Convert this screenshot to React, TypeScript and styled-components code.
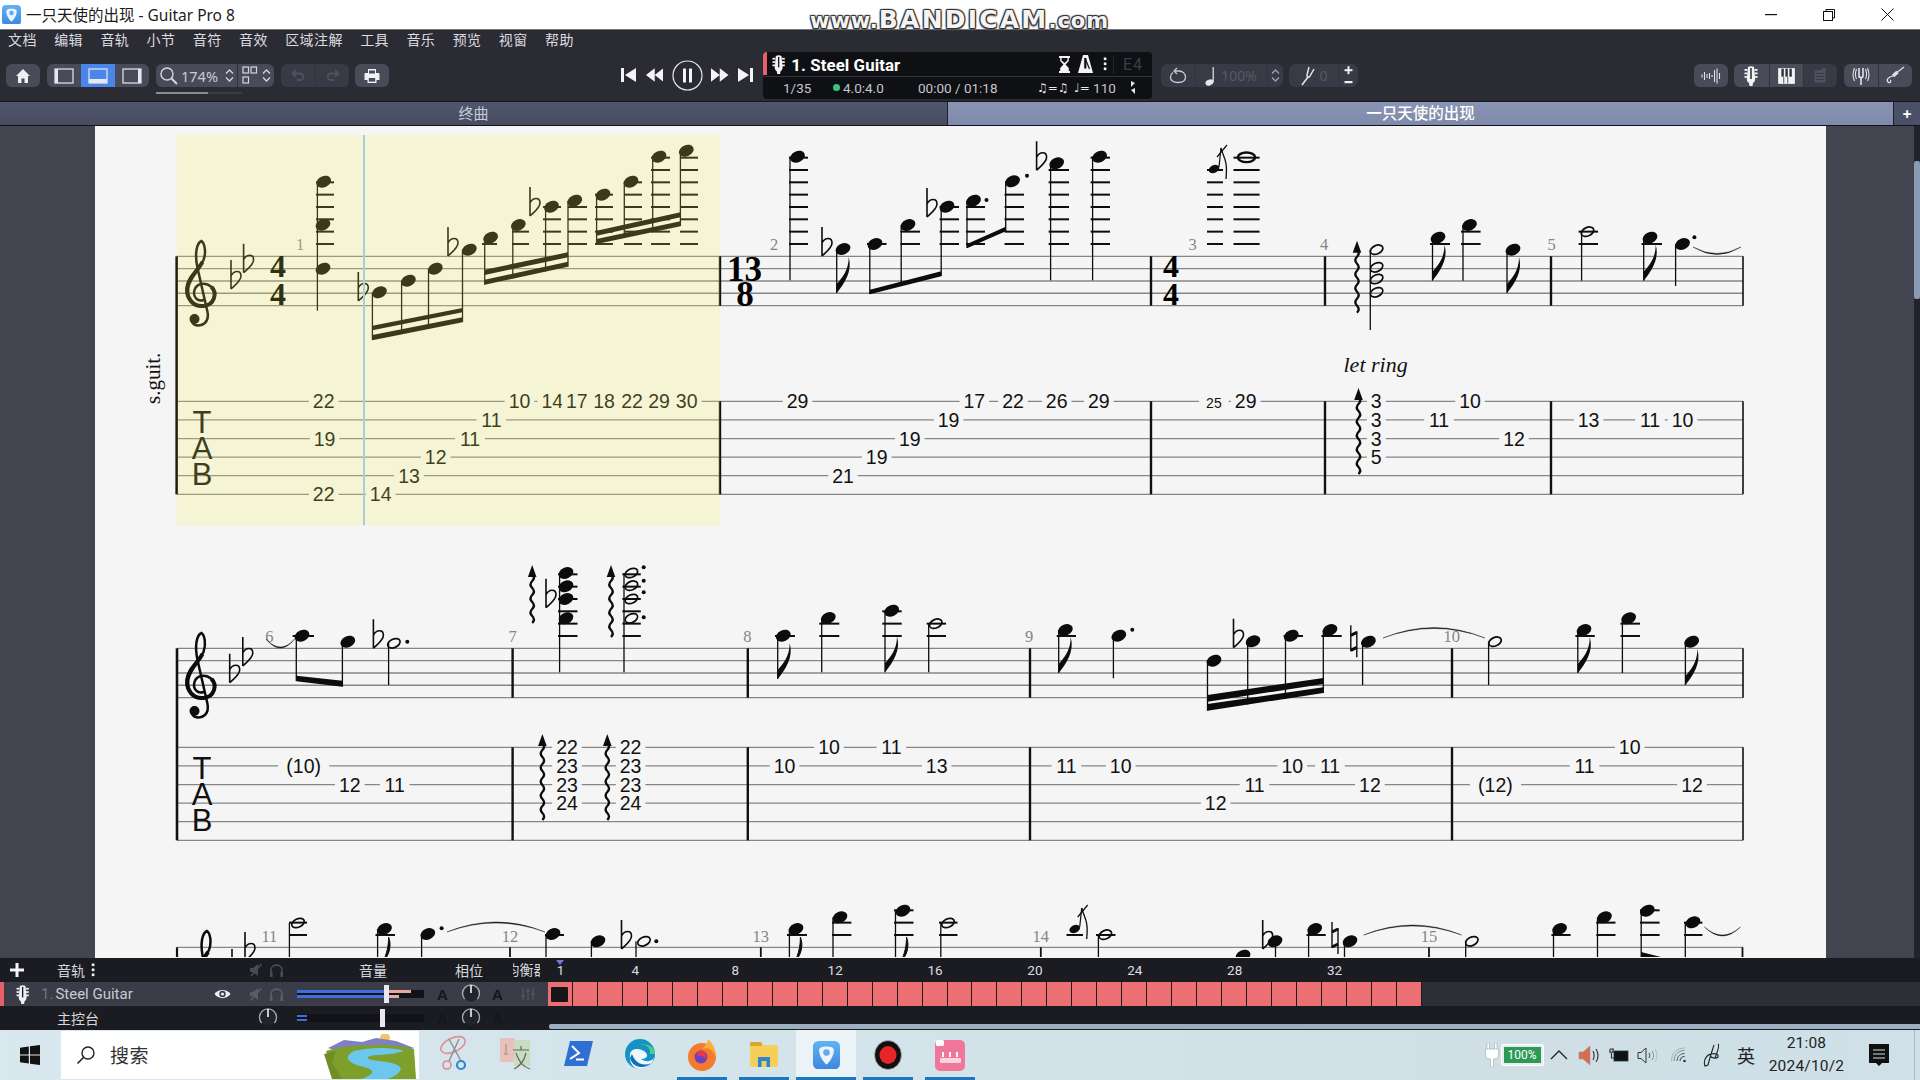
import React from "react";
import styled, { createGlobalStyle } from "styled-components";

const CJK = `"Noto Sans", "Noto Sans CJK SC", sans-serif`;

const GlobalStyle = createGlobalStyle`
  html, body { margin: 0; padding: 0; background: #2b2b33; }
  * { box-sizing: border-box; }
  #root { width: 1920px; height: 1080px; overflow: hidden; }
`;

const Root = styled.div`
  position: relative;
  width: 1920px;
  height: 1080px;
  display: flex;
  flex-direction: column;
  overflow: hidden;
  font-family: ${CJK};
`;

/* ---------- title bar ---------- */
const TitleBar = styled.div`
  height: 30px;
  flex: none;
  background: #fff;
  border-bottom: 1px solid #77777c;
  display: flex;
  align-items: center;
  padding-left: 2px;
`;
const AppTitle = styled.span`
  margin-left: 5px;
  font-size: 15.5px;
  color: #1c1c1c;
  white-space: nowrap;
`;
const WinControls = styled.div`
  margin-left: auto;
  display: flex;
  margin-right: 3px;
`;
const WinButton = styled.div`
  width: 58.5px;
  height: 28px;
  display: flex;
  align-items: center;
  justify-content: center;
`;
const Watermark = styled.div`
  position: absolute;
  left: 810px;
  top: 7px;
  font-family: "DejaVu Sans", sans-serif;
  font-weight: 700;
  font-size: 25px;
  line-height: 26px;
  letter-spacing: 2.2px;
  color: #f4f4f4;
  white-space: nowrap;
  text-shadow: 0 0 1px #222, 1px 1px 1px #333, -1px -1px 1px #333, 1px -1px 1px #333, -1px 1px 1px #333, 0 2px 2px #555;
  small { font-size: 21px; letter-spacing: 1px; }
`;

/* ---------- menu ---------- */
const MenuBar = styled.div`
  height: 22px;
  flex: none;
  background: #2b2b33;
  display: flex;
  align-items: center;
  gap: 17.4px;
  padding: 0 0 2px 8px;
`;
const MenuItem = styled.span`
  font-size: 14px;
  letter-spacing: 0.4px;
  color: #dcdce0;
  line-height: 20px;
`;

/* ---------- toolbar ---------- */
const Toolbar = styled.div`
  height: 50px;
  flex: none;
  background: #2b2b33;
  display: flex;
  align-items: flex-start;
  padding-left: 6px;
  border-bottom: 1px solid #16171b;
`;
const BtnGroup = styled.div<{ $ml?: number }>`
  margin-top: 12px;
  margin-left: ${(p) => p.$ml ?? 0}px;
  height: 23px;
  display: flex;
  flex: none;
  border-radius: 6px;
  overflow: hidden;
`;
const ToolBtn = styled.div<{ $w?: number; $on?: boolean; $dim?: boolean; $sep?: boolean }>`
  width: ${(p) => p.$w ?? 34}px;
  height: 23px;
  display: flex;
  align-items: center;
  justify-content: center;
  gap: 4px;
  background: ${(p) => (p.$on ? "#4a85ea" : p.$dim ? "#383a45" : "#494b59")};
  border-left: ${(p) => (p.$sep ? "1px solid #30313a" : "none")};
  color: #c9ccd8;
  font-size: 14.5px;
`;
const ZoomLabel = styled.span`
  margin: 0 3px 0 -2px;
`;
const DimText = styled.span`
  color: #565965;
  font-size: 14px;
`;
const ZoomWrap = styled.div`
  margin-left: 7px;
  display: flex;
  flex-direction: column;
  flex: none;
  & > div:first-child { margin-left: 0; }
`;
const ZoomTrack = styled.div`
  margin-top: 5px;
  width: 86px;
  height: 2px;
  background: #3b3c44;
`;
const ZoomThumb = styled.div`
  width: 52px;
  height: 2px;
  background: #8c8c92;
`;
const Transport = styled.div`
  margin-left: 232px;
  margin-top: 7px;
  display: flex;
  align-items: center;
  gap: 8.5px;
  height: 32px;
  flex: none;
`;
const InfoPanel = styled.div`
  margin-left: 10px;
  width: 389px;
  height: 47px;
  flex: none;
  background: #0f1014;
  border-radius: 4px;
  position: relative;
  overflow: hidden;
`;
const InfoAccent = styled.div`
  position: absolute;
  left: 0;
  top: 0;
  width: 4px;
  height: 23px;
  background: #e9606b;
`;
const InfoTop = styled.div`
  height: 25px;
  display: flex;
  align-items: center;
  padding-left: 9px;
  border-bottom: 1px solid #33343b;
  color: #fff;
`;
const TrackName = styled.span`
  margin-left: 6px;
  padding-top: 2px;
  font-family: Roboto, sans-serif;
  font-weight: 700;
  font-size: 16.8px;
  letter-spacing: 0.1px;
  white-space: nowrap;
`;
const InfoIcons = styled.div`
  margin-left: auto;
  display: flex;
  align-items: center;
  height: 24px;
`;
const IconSlot = styled.div<{ $w: number }>`
  width: ${(p) => p.$w}px;
  display: flex;
  align-items: center;
  justify-content: center;
`;
const TuneText = styled.span`
  width: 39px;
  padding-left: 9px;
  border-left: 1px solid #24252a;
  font-family: Roboto, sans-serif;
  font-size: 16px;
  letter-spacing: 1px;
  color: #3d3e46;
`;
const InfoBottom = styled.div`
  height: 21px;
  position: relative;
  display: flex;
  align-items: center;
  font-family: Roboto, sans-serif;
  font-size: 13.5px;
  color: #c6c7cc;
  white-space: nowrap;
`;
const InfoCell = styled.span<{ $w: number; $ml?: number }>`
  width: ${(p) => p.$w}px;
  margin-left: ${(p) => p.$ml ?? 0}px;
  display: inline-flex;
  align-items: center;
  flex: none;
`;
const StatusDot = styled.i`
  width: 7px;
  height: 7px;
  border-radius: 50%;
  background: #3cc27a;
  margin-right: 3px;
`;
const MusicGlyph = styled.span`
  font-family: "DejaVu Sans", sans-serif;
  color: #e8e8ea;
  font-size: 12px;
`;

/* ---------- tab bar ---------- */
const TabBar = styled.div`
  height: 24px;
  flex: none;
  display: flex;
  border-bottom: 1px solid #11131a;
`;
const Tab = styled.div<{ $on?: boolean; $w: number }>`
  width: ${(p) => p.$w}px;
  flex: none;
  display: flex;
  align-items: center;
  justify-content: center;
  padding-bottom: 2px;
  font-size: ${(p) => (p.$on ? 15.5 : 15)}px;
  background: ${(p) => (p.$on ? "linear-gradient(#8a94b6, #7f8aaa)" : "linear-gradient(#50566e, #474c60)")};
  color: ${(p) => (p.$on ? "#ffffff" : "#c8ccd6")};
  font-weight: ${(p) => (p.$on ? 500 : 400)};
  border-right: 1px solid #1d2029;
`;
const AddTab = styled.div`
  flex: 1;
  display: flex;
  align-items: center;
  justify-content: center;
  background: #4b5069;
  color: #fff;
  font-size: 16px;
  font-weight: 700;
`;

/* ---------- score ---------- */
const ScoreArea = styled.div`
  flex: 1;
  min-height: 0;
  display: flex;
  background: #42444f;
`;
const Gutter = styled.div<{ $w: number }>`
  width: ${(p) => p.$w}px;
  flex: none;
  display: flex;
  justify-content: flex-end;
`;
const ScrollTrack = styled.div`
  width: 6px;
  height: 100%;
  background: #22232a;
  padding-top: 35px;
`;
const ScrollThumb = styled.div`
  width: 6px;
  height: 138px;
  background: #8a9bb6;
  border-radius: 2px;
`;
const Page = styled.div`
  width: 1731px;
  flex: none;
  background: #f5f5f5;
  overflow: hidden;
`;
const TabNum = styled.text<{ $s?: number }>`
  font-family: "Liberation Sans", sans-serif;
  font-size: ${(p) => p.$s ?? 19.5}px;
  fill: #111;
  text-anchor: middle;
`;
const BarNum = styled.text`
  font-family: "Liberation Serif", serif;
  font-size: 16.5px;
  fill: #858585;
  text-anchor: middle;
`;
const TabLetter = styled.text`
  font-family: "Liberation Sans", sans-serif;
  font-size: 31px;
  fill: #111;
  text-anchor: middle;
`;
const TimeSig = styled.text<{ $s: number }>`
  font-family: "Liberation Serif", serif;
  font-weight: 700;
  font-size: ${(p) => p.$s}px;
  fill: #000;
  text-anchor: middle;
`;
const ScoreText = styled.text<{ $s: number; $i?: boolean }>`
  font-family: "Liberation Serif", serif;
  font-size: ${(p) => p.$s}px;
  font-style: ${(p) => (p.$i ? "italic" : "normal")};
  fill: #111;
`;

/* ---------- track panel ---------- */
const Panel = styled.div`
  height: 72px;
  flex: none;
  display: grid;
  grid-template-columns: 548px 1fr;
  grid-template-rows: 24px 24px 24px;
  background: #1b1c21;
  font-size: 14px;
  color: #d8d8dc;
`;
const TrackCols = styled.div<{ $bg?: string }>`
  display: grid;
  grid-template-columns: 46px 124px 75px 45px 140px 25px 32px 21px 40px;
  align-items: center;
  height: 24px;
  background: ${(p) => p.$bg ?? "#1b1c21"};
  position: relative;
`;
const Cell = styled.div<{ $span?: number; $pl?: number; $j?: string }>`
  grid-column: span ${(p) => p.$span ?? 1};
  padding-left: ${(p) => p.$pl ?? 0}px;
  display: flex;
  align-items: center;
  justify-content: ${(p) => p.$j ?? "flex-start"};
  gap: 6px;
  height: 24px;
  min-width: 0;
`;
const Clip = styled.div`
  margin-left: 5px;
  width: 27px;
  height: 24px;
  overflow: hidden;
  display: flex;
  justify-content: center;
  white-space: nowrap;
  line-height: 24px;
`;
const TrackAccent = styled.div`
  position: absolute;
  left: 0;
  top: 0;
  width: 4px;
  height: 24px;
  background: #e9606b;
`;
const TrackLabel = styled.span`
  margin-left: -5px;
  font-family: Roboto, sans-serif;
  font-size: 15px;
  color: #c9cad0;
  white-space: nowrap;
  em { font-style: normal; color: #74767f; margin-right: 2px; }
`;
const AutoA = styled.span`
  font-family: "Liberation Sans", sans-serif;
  font-weight: 700;
  font-size: 15px;
  color: #15161a;
`;
const Slider = styled.div`
  position: relative;
  width: 127px;
  height: 18px;
  margin-left: 7px;
  display: flex;
  flex-direction: column;
  justify-content: center;
  gap: 2px;
  background: linear-gradient(#0000 5px, #121318 5px, #121318 13px, #0000 13px);
`;
const MeterBar = styled.div<{ $w: number; $c: string; $h?: number }>`
  width: ${(p) => p.$w}px;
  height: ${(p) => p.$h ?? 3}px;
  background: ${(p) => p.$c};
`;
const MeterRow = styled.div`
  display: flex;
`;
const Handle = styled.div<{ $x: number }>`
  position: absolute;
  left: ${(p) => p.$x}px;
  top: 0;
  width: 5px;
  height: 18px;
  background: #e8e8ee;
`;
const Ruler = styled.div`
  display: grid;
  grid-template-columns: repeat(35, 24.97px);
  height: 24px;
  align-items: center;
  justify-items: center;
  font-family: Roboto, sans-serif;
  font-size: 13.5px;
  color: #dcdce0;
  position: relative;
`;
const Playhead = styled.div`
  position: absolute;
  left: 8px;
  top: 2px;
  width: 0;
  height: 0;
  border-left: 4px solid transparent;
  border-right: 4px solid transparent;
  border-top: 5px solid #6c7ae0;
`;
const RulerNum = styled.span`
  white-space: nowrap;
`;
const Cells = styled.div`
  height: 24px;
  background: #2d2e36;
  display: flex;
`;
const Measure = styled.div`
  width: 24.97px;
  height: 24px;
  flex: none;
  background: #ec7073;
  border-right: 1px solid #22181a;
  display: flex;
  align-items: center;
  justify-content: center;
`;
const Cursor = styled.div`
  width: 17px;
  height: 15px;
  background: #17161a;
  border-radius: 1px;
`;
const TimelineFoot = styled.div`
  height: 24px;
  display: flex;
  align-items: flex-end;
  padding-bottom: 1px;
`;
const HScroll = styled.div`
  width: 100%;
  margin-left: 1px;
  height: 5px;
  background: #9cafc0;
  border-radius: 2px 0 0 2px;
`;

/* ---------- taskbar ---------- */
const Taskbar = styled.div`
  height: 50px;
  flex: none;
  display: flex;
  align-items: stretch;
  background: linear-gradient(90deg, #d9e7ee, #d2e3ea 50%, #d0dfe6 80%, #cfe0e8);
`;
const StartSlot = styled.div`
  width: 61px;
  display: flex;
  align-items: center;
  justify-content: center;
  padding-right: 1px;
`;
const SearchBox = styled.div`
  width: 358px;
  margin: 1px 0;
  background: #fff;
  display: flex;
  align-items: center;
  padding-left: 15px;
  overflow: hidden;
  position: relative;
`;
const SearchLabel = styled.span`
  margin-left: 14px;
  font-size: 19px;
  color: #333;
  letter-spacing: 0.5px;
`;
const SearchArt = styled.div`
  margin-left: auto;
  margin-right: 3px;
  align-self: flex-end;
  display: flex;
`;
const Apps = styled.div`
  margin-left: 4px;
  display: flex;
`;
const AppSlot = styled.div<{ $open?: boolean; $active?: boolean }>`
  width: ${(p) => (p.$active ? 60 : p.$open ? 50 : 62)}px;
  margin: 0 ${(p) => (p.$active ? 1 : p.$open ? 6 : 0)}px;
  display: flex;
  align-items: center;
  justify-content: center;
  background: ${(p) => (p.$active ? "#ecf3f7" : "transparent")};
  border-bottom: 3px solid ${(p) => (p.$open || p.$active ? "#1a78c2" : "transparent")};
  padding-top: ${(p) => (p.$open || p.$active ? 3 : 0)}px;
`;
const Tray = styled.div`
  margin-left: auto;
  display: flex;
  align-items: center;
`;
const TraySlot = styled.div<{ $w: number }>`
  width: ${(p) => p.$w}px;
  height: 50px;
  display: flex;
  align-items: center;
  justify-content: center;
`;
const BatteryBody = styled.div`
  width: 43px;
  height: 22px;
  margin-left: 2px;
  padding: 2px;
  border: 1px solid #fff;
  border-radius: 2px;
  background: #e8eef0;
`;
const BatteryFill = styled.div`
  height: 16px;
  background: #2b9a57;
  color: #fff;
  font-size: 12px;
  line-height: 16px;
  text-align: center;
  font-family: Roboto, sans-serif;
`;
const ImeText = styled.span`
  font-size: 18px;
  color: #222;
`;
const Clock = styled.div`
  font-family: Roboto, sans-serif;
  font-size: 15.5px;
  line-height: 23px;
  text-align: center;
  color: #222;
  letter-spacing: 0.2px;
`;
const TrayEnd = styled.div`
  width: 9px;
  margin-right: 5px;
  height: 50px;
  border-right: 1px solid #aab9c2;
`;

/* ---------- icons ---------- */
const HomeIcon = () => (
  <svg width="16" height="16" viewBox="0 0 16 16"><path d="M8 1 L15 8 H13 V15 H9.5 V10.5 H6.5 V15 H3 V8 H1 Z" fill="#f0f0f4" /></svg>
);
const PaneIcon = ({ kind, c = "#e8e8ee" }: { kind: "left" | "bottom" | "right"; c?: string }) => (
  <svg width="20" height="16" viewBox="0 0 20 16">
    <rect x="1" y="1" width="18" height="14" fill="none" stroke={c} strokeWidth="1.2" />
    {kind === "left" && <rect x="1" y="1" width="3" height="14" fill={c} />}
    {kind === "right" && <rect x="16" y="1" width="3" height="14" fill={c} />}
    {kind === "bottom" && <rect x="1" y="11" width="18" height="4" fill={c} />}
  </svg>
);
const Mag = () => (
  <svg width="20" height="20" viewBox="0 0 20 20" fill="none" stroke="#d4d7e2" strokeWidth="1.4">
    <circle cx="8" cy="8" r="6" /><path d="M12.5 12.5 L18 18" strokeWidth="2" />
  </svg>
);
const Chevrons = ({ c = "#d4d7e2" }: { c?: string }) => (
  <svg width="9" height="15" viewBox="0 0 9 15" fill="none" stroke={c} strokeWidth="1.3">
    <path d="M1 5.5 L4.5 2 L8 5.5 M1 9.5 L4.5 13 L8 9.5" />
  </svg>
);
const GridIcon = () => (
  <svg width="16" height="19" viewBox="0 0 16 19" fill="none" stroke="#d4d7e2" strokeWidth="1.2">
    <rect x="1" y="1" width="5.5" height="6" /><rect x="9" y="1" width="5.5" height="6" /><rect x="1" y="11" width="5.5" height="6" />
  </svg>
);
const UndoIcon = ({ flip }: { flip?: boolean }) => (
  <svg width="15" height="13" viewBox="0 0 15 13" fill="none" stroke="#4f515e" strokeWidth="1.8" style={flip ? { transform: "scaleX(-1)" } : undefined}>
    <path d="M5 1 L1.5 4.5 L5 8 M2 4.5 H9 C13 4.5 13.5 11 9 11 H6" />
  </svg>
);
const PrintIcon = () => (
  <svg width="16" height="16" viewBox="0 0 16 16"><path d="M4 1 H12 V5 H14.5 C15 5 15.5 5.5 15.5 6 V12 H12.5 V15 H3.5 V12 H.5 V6 C.5 5.5 1 5 1.5 5 H4 Z" fill="#f0f0f4" /><rect x="5" y="2.5" width="6" height="3" fill="#494b59" /><rect x="4.8" y="10" width="6.4" height="3.6" fill="#494b59" /></svg>
);
const Skip = ({ dir }: { dir: "prev" | "next" }) => (
  <svg width="15" height="16" viewBox="0 0 15 16" fill="#f4f4f6" style={dir === "next" ? { transform: "scaleX(-1)" } : undefined}>
    <rect x="0" y="1" width="3" height="14" /><path d="M15 1 V15 L4 8 Z" />
  </svg>
);
const Rew = ({ dir }: { dir: "back" | "fwd" }) => (
  <svg width="18.5" height="16" viewBox="0 0 19 16" fill="#f4f4f6" style={dir === "fwd" ? { transform: "scaleX(-1)" } : undefined}>
    <path d="M10 1 V15 L1 8 Z M19 1 V15 L10 8 Z" />
  </svg>
);
const PauseIcon = () => (
  <svg width="31" height="31" viewBox="0 0 31 31">
    <circle cx="15.5" cy="15.5" r="14.5" fill="none" stroke="#e8e8ee" strokeWidth="1.2" />
    <rect x="11" y="8.5" width="3" height="14" rx="0.5" fill="#f4f4f6" /><rect x="17" y="8.5" width="3" height="14" rx="0.5" fill="#f4f4f6" />
  </svg>
);
const Headstock = ({ c = "#f4f4f6", h = 20 }: { c?: string; h?: number }) => (
  <svg width={h * 0.7} height={h} viewBox="0 0 14 20">
    <path d="M4 1 C6 0 8 0 10 1 L11 11 C11.5 14 11 16 9 17 L8.5 20 H5.5 L5 17 C3 16 2.5 14 3 11 Z" fill={c} />
    <g fill={c}><rect x="0.5" y="3" width="3" height="1.8" /><rect x="0.5" y="6.5" width="3" height="1.8" /><rect x="0.5" y="10" width="3" height="1.8" /><rect x="10.5" y="3" width="3" height="1.8" /><rect x="10.5" y="6.5" width="3" height="1.8" /><rect x="10.5" y="10" width="3" height="1.8" /></g>
    <g fill="#1a1b20"><rect x="6.3" y="2" width="1.4" height="11" /></g>
  </svg>
);
const Hourglass = () => (
  <svg width="13" height="17" viewBox="0 0 13 17"><path d="M1 0 H12 V2 H10.8 V5 L7.6 8.5 L10.8 12 V15 H12 V17 H1 V15 H2.2 V12 L5.4 8.5 L2.2 5 V2 H1 Z" fill="#f4f4f6" /><path d="M3.6 2 H9.4 V4.4 L6.5 7 L3.6 4.4 Z" fill="#0f1014" /></svg>
);
const Metronome = () => (
  <svg width="15" height="18" viewBox="0 0 15 18"><path d="M5 0 H10 L15 18 H0 Z" fill="#f4f4f6" /><path d="M7 3 L11.5 14" stroke="#0f1014" strokeWidth="1.2" /><path d="M6.2 3 H8.4 V13.5 H6.2 Z" fill="#0f1014" /></svg>
);
const Dots = ({ c = "#f4f4f6" }: { c?: string }) => (
  <svg width="4" height="14" viewBox="0 0 4 14" fill={c}><rect x="0.8" y="0.5" width="2.6" height="2.6" /><rect x="0.8" y="5.5" width="2.6" height="2.6" /><rect x="0.8" y="10.5" width="2.6" height="2.6" /></svg>
);
const TimeFig = () => (
  <svg width="6" height="15" viewBox="0 0 6 15" fill="#e8e8ea"><path d="M1 1 L5 3 L1 7 Z M5 8 L1 10 L5 14 Z" /></svg>
);
const LoopIcon = () => (
  <svg width="18" height="17" viewBox="0 0 18 17" fill="none" stroke="#c6cad6" strokeWidth="1.3"><path d="M5 4 H10 C14 4 16.5 7 16.5 10 C16.5 13.5 14 15.5 9 15.5 C4 15.5 1.5 13.5 1.5 10 C1.5 8 2.5 6.5 4 5.5" /><path d="M8 1 L5 4 L8 7" /></svg>
);
const NoteIcon = ({ c = "#e4e6ee" }: { c?: string }) => (
  <svg width="12" height="20" viewBox="0 0 12 20"><ellipse cx="4.5" cy="16.5" rx="4.2" ry="2.8" fill={c} transform="rotate(-20 4.5 16.5)" /><rect x="7.6" y="1" width="1.2" height="15" fill={c} /></svg>
);
const Fork = () => (
  <svg width="16" height="20" viewBox="0 0 16 20" fill="none" stroke="#e4e6ee" strokeWidth="1.5"><path d="M9 1 L7 9 C6.5 11 9 12 10 10 L14 3" /><path d="M8 11 L2 19" /></svg>
);
const PlusMinus = () => (
  <svg width="9" height="21" viewBox="0 0 9 21" fill="#f0f0f4"><rect x="0.5" y="4.2" width="8" height="2" /><rect x="3.5" y="1.2" width="2" height="8" /><rect x="0.5" y="16" width="8" height="2.2" /></svg>
);
const Wave = () => (
  <svg width="20" height="16" viewBox="0 0 20 16" stroke="#dfe1ea" strokeWidth="1.1"><path d="M1 6.5 V9.5 M3.5 4 V12 M6 6 V10 M8.5 5 V11 M11 7 V9 M13.5 2 V14 M16 0.5 V15.5 M18.5 5 V11" /></svg>
);
const Piano = () => (
  <svg width="17" height="16" viewBox="0 0 17 16"><rect x="0.7" y="0.7" width="15.6" height="14.6" fill="#f4f4f6" stroke="#f4f4f6" /><g fill="#30313a"><rect x="3.4" y="0.7" width="2.4" height="8" /><rect x="7.4" y="0.7" width="2.4" height="8" /><rect x="11.4" y="0.7" width="2.4" height="8" /><rect x="5.4" y="9" width="0.8" height="6.4" /><rect x="9.4" y="9" width="0.8" height="6.4" /></g></svg>
);
const Amp = () => (
  <svg width="13" height="15" viewBox="0 0 13 15"><rect x="0.5" y="2" width="11" height="12.5" fill="#4e505d" /><rect x="2" y="5" width="8" height="1" fill="#393b46" /><rect x="2" y="8" width="8" height="1" fill="#393b46" /><rect x="2" y="11" width="8" height="1" fill="#393b46" /><rect x="8" y="0" width="4" height="2" fill="#4e505d" /></svg>
);
const ForkWave = () => (
  <svg width="20" height="20" viewBox="0 0 20 20" fill="none" stroke="#dfe1ea" strokeWidth="1.1"><path d="M8 2 V10 C8 12 12 12 12 10 V2 M10 12 V19" strokeWidth="1.6" /><path d="M5.5 3 C4 7 4 10 5.5 13 M3.5 2 C1.5 7 1.5 11 3.5 15 M14.5 3 C16 7 16 10 14.5 13 M16.5 2 C18.5 7 18.5 11 16.5 15" /></svg>
);
const Jack = () => (
  <svg width="20" height="20" viewBox="0 0 20 20" fill="none" stroke="#dfe1ea"><path d="M19 1 L10 8" strokeWidth="1.2" /><path d="M12.5 6 L8 10" strokeWidth="3.4" /><path d="M8 10 C3 11 1 14 3 16 C5 18 7 15 5 14" strokeWidth="1.2" /></svg>
);
const Eye = () => (
  <svg width="17" height="12" viewBox="0 0 17 12"><path d="M0.5 6 C4 0.5 13 0.5 16.5 6 C13 11.5 4 11.5 0.5 6 Z" fill="#eeeef2" /><circle cx="8.5" cy="6" r="3.2" fill="#3a3c47" /><circle cx="8.5" cy="6" r="1.6" fill="#eeeef2" /></svg>
);
const MuteIcon = ({ c }: { c: string }) => (
  <svg width="14" height="14" viewBox="0 0 14 14" fill={c}><path d="M1 5 H4 L9 1 V13 L4 9 H1 Z" /><path d="M12.5 1 L2 13" stroke={c} strokeWidth="1.6" /></svg>
);
const Phones = ({ c }: { c: string }) => (
  <svg width="15" height="15" viewBox="0 0 15 15" fill="none" stroke={c} strokeWidth="1.6"><path d="M2 10 V7 C2 0.5 13 0.5 13 7 V10" /><rect x="1" y="9" width="2.6" height="5" fill={c} stroke="none" /><rect x="11.4" y="9" width="2.6" height="5" fill={c} stroke="none" /></svg>
);
const Knob = () => (
  <svg width="20" height="20" viewBox="0 0 20 20"><circle cx="10" cy="10" r="7.5" fill="#22232b" /><path d="M3.6 15 A8.5 8.5 0 1 1 16.4 15" fill="none" stroke="#a9abb4" strokeWidth="1.3" /><rect x="9.2" y="1" width="1.6" height="8" fill="#f2f2f4" /></svg>
);
const Faders = () => (
  <svg width="14" height="14" viewBox="0 0 14 14" stroke="#54565f" strokeWidth="1.3"><path d="M2 1 V13 M7 1 V13 M12 1 V13" /><path d="M0.5 9 H3.5 M5.5 4 H8.5 M10.5 7 H13.5" strokeWidth="2" /></svg>
);
const GpIcon = ({ s }: { s: number }) => (
  <svg width={s} height={s * 1.05} viewBox="0 0 20 21">
    <defs><linearGradient id="gpg" x1="0" x2="0" y1="0" y2="1"><stop offset="0" stopColor="#63b2f4" /><stop offset="1" stopColor="#3c87df" /></linearGradient></defs>
    <rect x="0" y="0" width="20" height="21" rx="4" fill="url(#gpg)" />
    <path d="M10 4 C13 4 15.5 4.5 15.5 7 C15.5 11 12 16 10 17.5 C8 16 4.5 11 4.5 7 C4.5 4.5 7 4 10 4 Z" fill="#eaf4fd" />
    <circle cx="10" cy="8.5" r="2.4" fill="#62aaf0" />
  </svg>
);
const Windows = () => (
  <svg width="20" height="20" viewBox="0 0 20 20" fill="#111"><path d="M0 2.7 L8.8 1.5 V9.5 H0 Z M10 1.3 L20 0 V9.5 H10 Z M0 10.5 H8.8 V18.5 L0 17.3 Z M10 10.5 H20 V20 L10 18.7 Z" /></svg>
);
const SearchGlass = () => (
  <svg width="20" height="20" viewBox="0 0 20 20" fill="none" stroke="#222" strokeWidth="1.4"><circle cx="12" cy="8" r="6" /><path d="M7.7 12.3 L1.5 18.5" strokeWidth="1.6" /></svg>
);
const Landscape = () => (
  <svg width="92" height="45" viewBox="0 0 92 45">
    <circle cx="61" cy="4" r="5" fill="#f4c46a" />
    <path d="M4 14 L20 6 L38 8 L52 4 L72 7 L90 14 L70 20 L20 20 Z" fill="#7f7fc4" />
    <path d="M2 17 C20 10 70 8 90 15 L92 45 H12 Z" fill="#7e9f2c" />
    <path d="M0 20 L12 17 L8 28 L18 45 H8 Z" fill="#6e8f24" />
    <path d="M30 17 C50 12 72 14 80 17 C66 22 42 20 44 24 C46 28 70 26 76 33 C80 38 66 45 62 45 H38 C50 40 54 36 36 32 C22 28 20 22 30 17 Z" fill="#6cc7ec" />
  </svg>
);
const Snip = () => (
  <svg width="30" height="38" viewBox="0 0 30 38" fill="none">
    <ellipse cx="14" cy="10" rx="13" ry="7" stroke="#e88a92" strokeWidth="1.6" transform="rotate(-25 14 10)" />
    <path d="M10 4 L22 26 M20 4 L10 26" stroke="#8a8f9a" strokeWidth="1.4" />
    <circle cx="8" cy="30" r="4" stroke="#d98a92" strokeWidth="1.6" /><circle cx="22" cy="30" r="4" stroke="#2f86d8" strokeWidth="2.2" />
  </svg>
);
const TranslateIcon = () => (
  <svg width="32" height="36" viewBox="0 0 32 36">
    <rect x="0" y="2" width="15" height="24" rx="1" fill="#e8c0be" /><rect x="14" y="4" width="16" height="26" rx="1" fill="#c8dcc0" />
    <path d="M6 8 V18 M4 18 H8" stroke="#b98" strokeWidth="1.4" />
    <path d="M13 14 H29 M21 10 V14 M16 17 C20 28 24 31 30 33 M26 17 C24 26 20 30 14 33" stroke="#666" strokeWidth="1.2" fill="none" />
  </svg>
);
const PowerShell = () => (
  <svg width="29" height="25" viewBox="0 0 29 25"><path d="M6 0 H29 L23 25 H0 Z" fill="#2f6fd1" /><path d="M8 5 L15 12 L6 18" stroke="#fff" strokeWidth="2" fill="none" /><rect x="12" y="17.5" width="8" height="2" fill="#fff" /></svg>
);
const Edge = () => (
  <svg width="30" height="30" viewBox="0 0 30 30"><circle cx="15" cy="15" r="15" fill="#1492c6" /><path d="M30 15 C30 8 23 4 15 6 C22 5 26 10 25 15 Z" fill="#45d18a" /><path d="M5 16 C5 10 12 9 17 11 C24 14 24 20 16 20 C20 23 26 23 29 19 C27 27 20 30 15 30 C8 30 4 23 5 16 Z" fill="#fff" opacity="0.92" /><path d="M7 15 C10 24 18 28 26 24 C21 30 8 30 5 19 Z" fill="#0e6fb4" /></svg>
);
const Firefox = () => (
  <svg width="28" height="32" viewBox="0 0 28 32"><circle cx="14" cy="18" r="14" fill="#f37b2f" /><path d="M20 0 C26 6 28 12 28 18 C24 10 20 8 14 10 C18 6 20 4 20 0 Z" fill="#fbb034" /><circle cx="13" cy="18" r="6.5" fill="#6f3fbd" /><path d="M13 11 C17 12 19 16 18 20 C16 17 12 16 9 17 C9 14 11 12 13 11 Z" fill="#e3384f" /></svg>
);
const Folder = () => (
  <svg width="28" height="26" viewBox="0 0 28 26"><path d="M0 3 C0 1 1 0 3 0 H10 L13 3 H25 C27 3 28 4 28 6 V22 C28 24 27 25 25 25 H3 C1 25 0 24 0 22 Z" fill="#f6cf58" /><rect x="0" y="0" width="12" height="4" rx="1.5" fill="#d9a52f" /><path d="M8 25 V15 H20 V25 H16.5 V19 H11.5 V25 Z" fill="#2f86d0" /></svg>
);
const RecDot = () => (
  <svg width="28" height="30" viewBox="0 0 28 30"><ellipse cx="14" cy="15" rx="13.5" ry="14.5" fill="#111" stroke="#bbb" strokeWidth="0.8" /><ellipse cx="14" cy="15" rx="8.5" ry="9" fill="#e6242a" /></svg>
);
const PinkApp = () => (
  <svg width="30" height="31" viewBox="0 0 30 31"><rect x="0" y="0" width="30" height="31" rx="5" fill="#f0769b" /><rect x="1" y="0" width="8" height="6" rx="1.5" fill="#fff" /><path d="M8 12 V17 M15 12 V17 M22 12 V17" stroke="#fff" strokeWidth="2" /><rect x="5" y="18" width="21" height="5" rx="1" fill="#fbd3df" /></svg>
);
const Plug = () => (
  <svg width="14" height="24" viewBox="0 0 14 24" fill="#fff" stroke="#9aa" strokeWidth="0.6"><rect x="2" y="0" width="2.6" height="7" /><rect x="9.4" y="0" width="2.6" height="7" /><path d="M0.5 6 H13.5 V12 C13.5 15 10 16 8.5 16 V24 H5.5 V16 C4 16 0.5 15 0.5 12 Z" /></svg>
);
const Chevron = () => (
  <svg width="18" height="10" viewBox="0 0 18 10" fill="none" stroke="#222" strokeWidth="1.3"><path d="M1 9 L9 1 L17 9" /></svg>
);
const RedSpeaker = () => (
  <svg width="21" height="21" viewBox="0 0 21 21"><path d="M1 7 H5 L12 1 V20 L5 14 H1 Z" fill="#d96b4e" stroke="#999" strokeWidth="0.6" /><path d="M15 6 C16.5 9 16.5 12 15 15 M18 4 C20.5 8 20.5 13 18 17" fill="none" stroke="#444" strokeWidth="1.3" /></svg>
);
const BatteryIcon = () => (
  <svg width="20" height="16" viewBox="0 0 20 16"><rect x="5" y="4" width="14" height="10" fill="#111" stroke="#333" strokeWidth="0.8" /><path d="M1 2 H5 M1 5 H4 M1 2 V6 M4 2 V6 M2.5 6 V11 H5" stroke="#333" fill="none" strokeWidth="1.2" /></svg>
);
const VolOutline = () => (
  <svg width="21" height="19" viewBox="0 0 21 19" fill="none" stroke="#333" strokeWidth="1"><path d="M1 6.5 H4 L9 2 V17 L4 12.5 H1 Z" /><path d="M12 7 C13 9 13 10 12 12" /><path d="M15 5 C17 8 17 11 15 14" stroke="#888" /><path d="M18 3 C20.5 7 20.5 12 18 16" stroke="#bbb" /></svg>
);
const Wifi = () => (
  <svg width="16" height="16" viewBox="0 0 16 16" fill="none" stroke="#333" strokeWidth="1"><circle cx="13.5" cy="14" r="1.3" fill="#333" stroke="none" /><path d="M9 14 C9 11.5 11 9.5 13.5 9.5" /><path d="M6 14 C6 9.5 9.5 6.5 13.5 6.5" stroke="#555" /><path d="M3 14 C3 7.5 8 3.5 13.5 3.5" stroke="#888" /><path d="M0.5 14 C0.5 6 6 1 13.5 1" stroke="#aaa" /></svg>
);
const Pen = () => (
  <svg width="20" height="24" viewBox="0 0 20 24" fill="none" stroke="#222" strokeWidth="1.1"><path d="M11 2 C9 8 7 14 5 22 L2 23 C0 18 3 12 8 11 C12 10 16 11 15 14 C13 16 9 15 7 13" /><path d="M15 1 C17 2 14 10 12 15" /></svg>
);
const Notify = () => (
  <svg width="20" height="23" viewBox="0 0 20 23"><path d="M0 0 H20 V19 H13 L10 22 L7 19 H0 Z" fill="#111" /><path d="M4 6 H16 M4 10 H16 M4 14 H16" stroke="#cfe0e8" strokeWidth="1" /></svg>
);

/* ---------- score drawing ---------- */
const line = "#868686";
const STEP = 12.33;

const Staff = ({ top, x1, x2 }: { top: number; x1: number; x2: number }) => (
  <g stroke={line} strokeWidth="1.35">
    {[0, 1, 2, 3, 4].map((i) => (
      <line key={i} x1={x1} x2={x2} y1={top + i * STEP} y2={top + i * STEP} />
    ))}
  </g>
);
const TabStaff = ({ top, x1, x2 }: { top: number; x1: number; x2: number }) => (
  <g stroke={line} strokeWidth="1.25">
    {[0, 1, 2, 3, 4, 5].map((i) => (
      <line key={i} x1={x1} x2={x2} y1={top + i * 18.6} y2={top + i * 18.6} />
    ))}
  </g>
);
const Bar = ({ x, y1, y2, w = 2.4 }: { x: number; y1: number; y2: number; w?: number }) => (
  <line x1={x} x2={x} y1={y1} y2={y2} stroke="#111" strokeWidth={w} />
);

type N = [number, number, number?, number?, string?];

const Notes = ({ list }: { list: N[] }) => (
  <g>
    {list.map(([x, y, sx, ey, o], i) => {
      const open = o?.includes("o");
      return (
        <g key={i}>
          {sx !== undefined && ey !== undefined && <line x1={sx} x2={sx} y1={y} y2={ey} stroke="#0c0c0c" strokeWidth="1.3" />}
          {open ? (
            <ellipse cx={x} cy={y} rx="6.6" ry="4.2" fill="none" stroke="#0c0c0c" strokeWidth="1.7" transform={`rotate(-25 ${x} ${y})`} />
          ) : (
            <ellipse cx={x} cy={y} rx="7.7" ry="5.5" fill="#0c0c0c" transform={`rotate(-25 ${x} ${y})`} />
          )}
          {o?.includes("f") && sx !== undefined && ey !== undefined && (
            <path d={`M${sx} ${ey} V${ey - 9} C${sx + 5} ${ey - 15} ${sx + 12} ${ey - 22} ${sx + 12} ${ey - 36} C${sx + 16} ${ey - 22} ${sx + 8} ${ey - 10} ${sx} ${ey} Z`} fill="#0c0c0c" />
          )}
        </g>
      );
    })}
  </g>
);

type Led = [number, number, number];
const Ledgers = ({ top, list }: { top: number; list: Led[] }) => (
  <g stroke="#0c0c0c" strokeWidth="2">
    {list.map(([a, b, n], i) =>
      Array.from({ length: n }, (_, k) => (
        <line key={`${i}-${k}`} x1={a} x2={b} y1={top - (k + 1) * STEP} y2={top - (k + 1) * STEP} />
      ))
    )}
  </g>
);

const Beams = ({ list }: { list: number[][] }) => (
  <g fill="#0c0c0c">
    {list.map(([x1, a, b, x2, c, d], i) => (
      <polygon key={i} points={`${x1},${a} ${x2},${c} ${x2},${d} ${x1},${b}`} />
    ))}
  </g>
);

const Flat = ({ x, y }: { x: number; y: number }) => (
  <path d={`M${x - 5} ${y - 17} V${y + 12} M${x - 5} ${y - 1} C${x - 2} ${y - 7} ${x + 5} ${y - 7} ${x + 5} ${y - 1} C${x + 5} ${y + 4} ${x - 1} ${y + 8} ${x - 5} ${y + 12}`} fill="none" stroke="#0c0c0c" strokeWidth="1.6" />
);
const Natural = ({ x, y }: { x: number; y: number }) => (
  <g stroke="#0c0c0c" fill="none">
    <path d={`M${x - 3} ${y - 16} V${y + 10}`} strokeWidth="1.4" />
    <path d={`M${x + 3} ${y - 10} V${y + 16}`} strokeWidth="1.4" />
    <path d={`M${x - 3} ${y - 6} L${x + 3} ${y - 9} M${x - 3} ${y + 9} L${x + 3} ${y + 6}`} strokeWidth="3" />
  </g>
);
const Dot = ({ x, y }: { x: number; y: number }) => <circle cx={x} cy={y} r="2" fill="#0c0c0c" />;
const Tie = ({ x1, x2, y, c, t = 2 }: { x1: number; x2: number; y: number; c: number; t?: number }) => (
  <path d={`M${x1} ${y} Q${(x1 + x2) / 2} ${c} ${x2} ${y} Q${(x1 + x2) / 2} ${c + (c > y ? t : -t)} ${x1} ${y} Z`} fill="#111" stroke="#111" strokeWidth="0.4" />
);
const Grace = ({ x, y }: { x: number; y: number }) => (
  <g fill="none" stroke="#0c0c0c">
    <ellipse cx={x} cy={y} rx="5.6" ry="3.8" fill="#0c0c0c" stroke="none" transform={`rotate(-25 ${x} ${y})`} />
    <path d={`M${x + 5} ${y - 2} L${x + 7} ${y - 21}`} strokeWidth="1.2" />
    <path d={`M${x + 7} ${y - 21} C${x + 9} ${y - 12} ${x + 14} ${y - 10} ${x + 12} ${y + 10}`} strokeWidth="1.3" />
    <path d={`M${x + 3} ${y - 12} L${x + 13} ${y - 24}`} strokeWidth="1.2" />
  </g>
);
const Clef = ({ x, y }: { x: number; y: number }) => (
  <g transform={`translate(${x} ${y})`} fill="none" stroke="#0c0c0c">
    <path d="M19 60 C13 62 8 57 10 50 C12 43 21 42 27 47 C33 53 30 65 19 66 C8 67 1 58 2 48 C3 36 14 30 19 20 C22 12 20 3 17 1 C12 3 10 14 13 28 L23 72 C25 82 18 87 11 85 C6 83 6 76 11 75" strokeWidth="2.5" />
    <path d="M27 47 C33 53 30 65 19 66 C8 67 2 58 3 48 C4 38 13 31 18 22" strokeWidth="4" />
    <circle cx="10" cy="79" r="5" fill="#0c0c0c" stroke="none" />
  </g>
);
const Arpeggio = ({ x, y1, y2 }: { x: number; y1: number; y2: number }) => {
  let d = `M${x} ${y1 + 9}`;
  let y = y1 + 9;
  let s = 1;
  while (y + 7 <= y2) {
    d += ` q${s * 3.4} 3.5 0 7`;
    y += 7;
    s = -s;
  }
  return (
    <g>
      <polygon points={`${x},${y1} ${x + 4.3},${y1 + 12} ${x - 4.3},${y1 + 12}`} fill="#0c0c0c" />
      <path d={d} fill="none" stroke="#0c0c0c" strokeWidth="2.3" />
    </g>
  );
};

type T = [number, number, string, number?];
const PAGE = "#f5f5f5";
const Fret = ({ top, list }: { top: number; list: T[] }) => (
  <g>
    {list.map(([x, l, s, size], i) => {
      const y = top + l * 18.6;
      const digits = s.length;
      return (
        <g key={i}>
          <rect x={x - digits * 5.4 - 4} y={y - 5} width={digits * 10.8 + 8} height="10" fill={PAGE} />
          <TabNum x={x} y={y + 7} $s={size}>{s}</TabNum>
        </g>
      );
    })}
  </g>
);
const TabMark = ({ y }: { y: number }) => (
  <g>
    <TabLetter x={202} y={y}>T</TabLetter>
    <TabLetter x={202} y={y + 26}>A</TabLetter>
    <TabLetter x={202} y={y + 52}>B</TabLetter>
  </g>
);

const S1: N[] = [
  [323.7, 182.7, 317.4, 311.7], [323, 225.7], [323, 269.7],
  [379.5, 293.3, 372.4, 341], [408.4, 281.7, 401.6, 335], [435.3, 269.7, 428.5, 330], [469.3, 250.7, 462.5, 323],
  [490.6, 238.7, 484.7, 285.7], [518.3, 226, 512.8, 279.5], [551.5, 207.7, 545.6, 272.5], [574.8, 201.7, 568, 267.7],
  [603, 195.7, 596.6, 245], [631, 182.7, 624.3, 238.5], [659, 157.7, 652.7, 233], [686.3, 151.7, 680.4, 227],
  [797.5, 157.7, 790, 281.3], [843, 250, 836.7, 294, "f"],
  [875, 245, 869.8, 295], [908, 226, 901.2, 287], [947, 207.7, 941.2, 277],
  [973.5, 201.7, 967, 249], [1012.6, 182.3, 1005.7, 232],
  [1056.7, 164.3, 1050.6, 281.3], [1099.6, 157.7, 1092.6, 281.3],
  [1376.6, 250.7, 1370.3, 331, "o"], [1376.6, 268.3, undefined, undefined, "o"], [1376.6, 280, undefined, undefined, "o"], [1376.6, 293.3, undefined, undefined, "o"],
  [1438, 238.7, 1432.5, 281.7, "f"], [1469.5, 226, 1463, 281.7], [1513, 250.7, 1507, 294, "f"],
  [1587.5, 232.7, 1581.6, 281.7, "o"], [1650, 238.7, 1643.7, 281.7, "f"], [1682.6, 245, 1675.6, 287],
];
const S1L: Led[] = [
  [316, 334, 6], [482, 497, 1], [512, 529, 2], [543, 561, 4], [568, 587, 4], [595, 613, 5], [624, 642, 6], [651, 670, 8], [680, 698, 8],
  [789, 808, 8], [867, 886.5, 1], [900.4, 920, 2], [939.6, 959, 4], [966, 985, 4], [1004.5, 1024, 5], [1048.6, 1069, 7], [1090.6, 1110, 8],
  [1207, 1223, 7], [1233.5, 1259.6, 8],
  [1430, 1450, 1], [1461, 1480.6, 2], [1578.6, 1598, 2], [1641.5, 1662, 1],
];
const S1B = [
  [372.4, 326.7, 331.3, 462.5, 309, 313.3], [372.4, 336, 341.3, 462.5, 318.3, 323.3],
  [484.7, 270.7, 276, 568, 253.3, 258.3], [484.7, 280.7, 285.7, 568, 262.7, 267.7],
  [596.6, 231.7, 236.7, 680.4, 213.3, 218.3], [596.6, 240, 245, 680.4, 222.3, 227.3],
  [869.8, 290.7, 295.3, 941.2, 272.3, 277.3], [967, 245, 249.3, 1005.7, 227.7, 232.3],
];
const S1T: T[] = [
  [323.7, 0, "22"], [324.5, 2, "19"], [323.7, 5, "22"], [380.7, 5, "14"], [409, 4, "13"], [435.7, 3, "12"], [470, 2, "11"], [491.4, 1, "11"],
  [519.5, 0, "10"], [552.3, 0, "14"], [576.8, 0, "17"], [604, 0, "18"], [632, 0, "22"], [659, 0, "29"], [686.7, 0, "30"],
  [797.5, 0, "29"], [843, 4, "21"], [876.7, 3, "19"], [909.8, 2, "19"], [948.6, 1, "19"], [974.3, 0, "17"], [1013, 0, "22"], [1056.7, 0, "26"], [1098.8, 0, "29"],
  [1213.9, 0, "25", 14], [1245.7, 0, "29"],
  [1376.3, 0, "3"], [1376.3, 1, "3"], [1376.3, 2, "3"], [1376.3, 3, "5"], [1470, 0, "10"], [1439, 1, "11"], [1514, 2, "12"],
  [1588.6, 1, "13"], [1650, 1, "11"], [1682.6, 1, "10"],
];

const S2: N[] = [
  [302, 636.7, 296.3, 682], [347.8, 642.7, 342.4, 687.7], [393.9, 644.3, 388.6, 686, "o"],
  [566, 574, 559.6, 673.3], [566, 587.3], [566, 600], [566, 619.3],
  [631.4, 574, 624, 673.3, "o"], [631.4, 586.7, undefined, undefined, "o"], [631.4, 600, undefined, undefined, "o"], [631.4, 619.3, undefined, undefined, "o"],
  [783.3, 636.7, 777.7, 680, "f"], [828.3, 619, 821.7, 673.3], [891.7, 611.7, 885, 673.3, "f"], [935.7, 624.7, 928.7, 673.3, "o"],
  [1065.4, 631, 1058.7, 674, "f"], [1118.8, 636.7, 1113.4, 679.3],
  [1214, 661.7, 1207.5, 711.7], [1253, 642.3, 1247.7, 705.6], [1291.3, 636.7, 1285.5, 699.8], [1330, 631, 1323.3, 694],
  [1368.4, 642.7, 1362.6, 686],
  [1495, 642.7, 1488.6, 686, "o"], [1584, 631, 1577.8, 674, "f"], [1628.7, 619.3, 1622.4, 674], [1691.7, 642.7, 1685.4, 686, "f"],
];
const S2L: Led[] = [
  [292.6, 314, 1], [558, 577.5, 6], [622.4, 640.8, 6], [775, 795, 1], [819.3, 839.3, 2], [882.3, 901.7, 3], [926.7, 946, 2],
  [1056.7, 1076, 1], [1283.6, 1303, 1], [1321.4, 1341.7, 1], [1575.4, 1594.8, 1], [1620.5, 1640, 2],
];
const S2B = [
  [296.3, 676.7, 682.3, 342.4, 681.7, 687.7],
  [1207.5, 696, 702.7, 1323.3, 679, 685], [1207.5, 705, 711.7, 1323.3, 688.3, 694],
];
const S2T: T[] = [
  [303.7, 1, "(10)"], [349.8, 2, "12"], [394.7, 2, "11"],
  [567, 0, "22"], [567, 1, "23"], [567, 2, "23"], [567, 3, "24"], [630.6, 0, "22"], [630.6, 1, "23"], [630.6, 2, "23"], [630.6, 3, "24"],
  [784.5, 1, "10"], [829, 0, "10"], [891.4, 0, "11"], [936.7, 1, "13"],
  [1066.4, 1, "11"], [1120.7, 1, "10"], [1215.7, 3, "12"], [1254.5, 2, "11"], [1292.3, 1, "10"], [1330, 1, "11"], [1369.9, 2, "12"],
  [1495.4, 2, "(12)"], [1584.6, 1, "11"], [1629.7, 0, "10"], [1692, 2, "12"],
];

const S3: N[] = [
  [298, 924, 289.4, 970, "o"], [384.5, 930, 377.6, 970], [427.8, 935, 421.6, 970], [553, 935, 546, 970], [598, 942.3, 591.4, 970], [644, 942.3, 636, 970, "o"],
  [796, 930, 789.4, 970], [840, 918.3, 833, 970], [903, 911.7, 895.5, 970], [948, 924, 940.8, 970, "o"],
  [1105.3, 935.7, 1098.4, 970, "o"], [1243, 956.7], [1275, 942.3, 1275.5, 970], [1314.7, 930, 1308.6, 970], [1350, 942.3, 1344.5, 970], [1471.8, 942.3, 1465.7, 970, "o"],
  [1559.6, 930, 1553.5, 970], [1604.5, 918.3, 1597.5, 970], [1647.3, 911.7, 1641.2, 970], [1693, 923.3, 1685.3, 970],
];
const S3L: Led[] = [
  [289, 307, 2], [375.5, 395, 1], [545, 564, 1], [787, 807, 1], [832, 851.4, 2], [894, 913.5, 3], [939, 957.5, 2], [1066.5, 1083, 1], [1096, 1115.5, 1],
  [1306.5, 1325.7, 1], [1551.4, 1570.6, 1], [1596.3, 1615.5, 2], [1640, 1659.6, 3], [1684, 1702.4, 2],
];
const S3Flags = [[377.6, 958], [789.4, 958], [895.5, 958]];

const Score = () => (
  <svg width="1731" height="831" viewBox="95 127 1731 831" style={{ display: "block" }}>
    {/* system 1 */}
    <Staff top={257.3} x1={176.7} x2={1743} />
    <TabStaff top={402.3} x1={176.7} x2={1743} />
    <Bar x={176.7} y1={257.3} y2={495.3} w={2.6} />
    {[720, 1151, 1325, 1551].map((x) => (
      <React.Fragment key={x}>
        <Bar x={x} y1={257.3} y2={306.7} />
        <Bar x={x} y1={402.3} y2={495.3} />
      </React.Fragment>
    ))}
    <Bar x={1743} y1={257.3} y2={306.7} w={1.6} />
    <Bar x={1743} y1={402.3} y2={495.3} w={1.6} />
    <Clef x={184.5} y={241} />
    <Flat x={236} y={278} />
    <Flat x={248.6} y={261.7} />
    <TimeSig x={278} y={278} $s={32}>4</TimeSig>
    <TimeSig x={278} y={306} $s={32}>4</TimeSig>
    <TimeSig x={744.5} y={282} $s={35}>13</TimeSig>
    <TimeSig x={745} y={307} $s={35}>8</TimeSig>
    <TimeSig x={1171} y={278} $s={32}>4</TimeSig>
    <TimeSig x={1171} y={306} $s={32}>4</TimeSig>
    <TabMark y={434} />
    <ScoreText $s={21} transform="translate(160 405) rotate(-90)">s.guit.</ScoreText>
    <BarNum x={300} y={251}>1</BarNum>
    <BarNum x={774} y={251}>2</BarNum>
    <BarNum x={1192.6} y={251}>3</BarNum>
    <BarNum x={1324} y={251}>4</BarNum>
    <BarNum x={1551.5} y={251}>5</BarNum>
    <Ledgers top={257.3} list={S1L} />
    <Notes list={S1} />
    <Beams list={S1B} />
    <Flat x={363.3} y={290} /><Flat x={453} y={245} /><Flat x={535} y={205} />
    <Flat x={827} y={245} /><Flat x={932} y={206} /><Flat x={1041.6} y={159.3} />
    <Dot x={986.5} y={201} /><Dot x={1027} y={176.7} /><Dot x={1694.4} y={238.3} />
    <Grace x={1214} y={170} />
    <ellipse cx="1246.5" cy="158.3" rx="8.6" ry="4.8" fill="none" stroke="#0c0c0c" strokeWidth="2.4" />
    <Arpeggio x={1357} y1={241.7} y2={315} />
    <Arpeggio x={1358.5} y1={389} y2={476.7} />
    <Tie x1={1693} x2={1741} y={248} c={261} />
    <ScoreText $s={22} $i x={1343.5} y={373}>let ring</ScoreText>
    <Fret top={402.3} list={S1T} />

    {/* playback highlight */}
    <rect x={176.7} y={136} width={543.3} height={390.5} fill="#f5f55a" opacity="0.2" />
    <rect x={363} y={136} width={2} height={390.5} fill="#a8cfd6" />

    {/* system 2 */}
    <Staff top={649.3} x1={177} x2={1743} />
    <TabStaff top={748.3} x1={177} x2={1743} />
    <Bar x={177} y1={649.3} y2={841.3} w={2.6} />
    {[512.6, 747.8, 1030, 1452].map((x) => (
      <React.Fragment key={x}>
        <Bar x={x} y1={649.3} y2={698.7} />
        <Bar x={x} y1={748.3} y2={841.3} />
      </React.Fragment>
    ))}
    <Bar x={1743} y1={649.3} y2={698.7} w={1.6} />
    <Bar x={1743} y1={748.3} y2={841.3} w={1.6} />
    <Clef x={184.5} y={633} />
    <Flat x={234.7} y={671.7} />
    <Flat x={247.8} y={655} />
    <TabMark y={780} />
    <BarNum x={269.4} y={643}>6</BarNum>
    <BarNum x={512.6} y={643}>7</BarNum>
    <BarNum x={747.3} y={643}>8</BarNum>
    <BarNum x={1029} y={643}>9</BarNum>
    <BarNum x={1451.8} y={643}>10</BarNum>
    <Ledgers top={649.3} list={S2L} />
    <Notes list={S2} />
    <Beams list={S2B} />
    <Flat x={378.4} y={637.3} /><Flat x={551} y={596.7} /><Flat x={1238.5} y={636.7} />
    <Natural x={1353.8} y={642.3} />
    <Dot x={407.3} y={642.7} /><Dot x={643.7} y={568.3} /><Dot x={643.7} y={581.7} /><Dot x={643.7} y={593.3} /><Dot x={643.7} y={618.3} /><Dot x={1132.3} y={630.7} />
    <Tie x1={266} x2={294.7} y={640} c={656} />
    <Tie x1={1383} x2={1485} y={639} c={620} />
    <Arpeggio x={532.2} y1={566} y2={628.3} />
    <Arpeggio x={611} y1={566} y2={640} />
    <Arpeggio x={542.4} y1={735} y2={822.7} />
    <Arpeggio x={607.3} y1={735} y2={822.7} />
    <Fret top={748.3} list={S2T} />

    {/* system 3 */}
    <Staff top={948.3} x1={177} x2={1743} />
    <Bar x={177} y1={948.3} y2={970} w={2.2} />
    {[510, 760.8, 1040.8, 1429, 1742.5].map((x) => (
      <Bar key={x} x={x} y1={948.3} y2={970} w={1.8} />
    ))}
    <Clef x={190} y={931} />
    <Flat x={237} y={967} />
    <Flat x={250} y={950} />
    <BarNum x={269.4} y={942.5}>11</BarNum>
    <BarNum x={510} y={942.5}>12</BarNum>
    <BarNum x={760.8} y={942.5}>13</BarNum>
    <BarNum x={1040.8} y={942.5}>14</BarNum>
    <BarNum x={1429} y={942.5}>15</BarNum>
    <Ledgers top={948.3} list={S3L} />
    <Notes list={S3} />
    {S3Flags.map(([x, y]) => (
      <path key={x} d={`M${x + 11} ${y - 20} C${x + 15} ${y - 10} ${x + 10} ${y} ${x + 6} ${y + 4} C${x + 9} ${y - 4} ${x + 11} ${y - 10} ${x + 11} ${y - 20} Z`} fill="#0c0c0c" stroke="#0c0c0c" />
    ))}
    <polygon points="1641,953 1661,958 1641,958" fill="#0c0c0c" />
    <Flat x={626.5} y={938} /><Flat x={1267.7} y={938} />
    <Natural x={1335} y={939} />
    <Dot x={441.6} y={929.3} /><Dot x={656.3} y={942.3} />
    <Grace x={1074.7} y={930} />
    <Tie x1={447} x2={545} y={933} c={915} />
    <Tie x1={1363.7} x2={1461.6} y={936} c={918} />
    <Tie x1={1704.5} x2={1740.4} y={928} c={944} />
  </svg>
);

const menus = ["文档", "编辑", "音轨", "小节", "音符", "音效", "区域注解", "工具", "音乐", "预览", "视窗", "帮助"];
const rulerLabels: Record<number, string> = { 0: "1", 3: "4", 7: "8", 11: "12", 15: "16", 19: "20", 23: "24", 27: "28", 31: "32" };
const measures = Array.from({ length: 35 }, (_, i) => i);

export default function App() {
  return (
    <Root>
      <GlobalStyle />
      <TitleBar>
        <GpIcon s={19} />
        <AppTitle>一只天使的出现 - Guitar Pro 8</AppTitle>
        <WinControls>
          <WinButton><svg width="12" height="2"><rect width="12" height="1.2" fill="#111" /></svg></WinButton>
          <WinButton><svg width="12" height="12" fill="none" stroke="#111"><rect x="0.5" y="2.5" width="9" height="9" /><path d="M3 2.5 V0.5 H11.5 V9 H9.5" /></svg></WinButton>
          <WinButton><svg width="13" height="13" stroke="#111" strokeWidth="1"><path d="M0.5 0.5 L12.5 12.5 M12.5 0.5 L0.5 12.5" /></svg></WinButton>
        </WinControls>
      </TitleBar>
      <Watermark><small>www.</small>BANDICAM<small>.com</small></Watermark>

      <MenuBar>
        {menus.map((m) => <MenuItem key={m}>{m}</MenuItem>)}
      </MenuBar>

      <Toolbar>
        <BtnGroup><ToolBtn><HomeIcon /></ToolBtn></BtnGroup>
        <BtnGroup $ml={7}>
          <ToolBtn><PaneIcon kind="left" /></ToolBtn>
          <ToolBtn $on><PaneIcon kind="bottom" /></ToolBtn>
          <ToolBtn><PaneIcon kind="right" /></ToolBtn>
        </BtnGroup>
        <ZoomWrap>
          <BtnGroup>
            <ToolBtn $w={81}><Mag /><ZoomLabel>174%</ZoomLabel><Chevrons /></ToolBtn>
            <ToolBtn $w={37} $sep><GridIcon /><Chevrons /></ToolBtn>
          </BtnGroup>
          <ZoomTrack><ZoomThumb /></ZoomTrack>
        </ZoomWrap>
        <BtnGroup $ml={7}>
          <ToolBtn $dim><UndoIcon /></ToolBtn>
          <ToolBtn $dim $sep><UndoIcon flip /></ToolBtn>
        </BtnGroup>
        <BtnGroup $ml={6}><ToolBtn><PrintIcon /></ToolBtn></BtnGroup>

        <Transport>
          <Skip dir="prev" />
          <Rew dir="back" />
          <PauseIcon />
          <Rew dir="fwd" />
          <Skip dir="next" />
        </Transport>

        <InfoPanel>
          <InfoAccent />
          <InfoTop>
            <Headstock h={19} />
            <TrackName>1. Steel Guitar</TrackName>
            <InfoIcons>
              <IconSlot $w={21}><Hourglass /></IconSlot>
              <IconSlot $w={21}><Metronome /></IconSlot>
              <IconSlot $w={17}><Dots /></IconSlot>
              <TuneText>E4</TuneText>
            </InfoIcons>
          </InfoTop>
          <InfoBottom>
            <InfoCell $w={50} $ml={20}>1/35</InfoCell>
            <InfoCell $w={85}><StatusDot />4.0:4.0</InfoCell>
            <InfoCell $w={119}>00:00 / 01:18</InfoCell>
            <InfoCell $w={37}><MusicGlyph>♫=♫</MusicGlyph></InfoCell>
            <InfoCell $w={56}><MusicGlyph>♩=</MusicGlyph>&nbsp;110</InfoCell>
            <InfoCell $w={8}><TimeFig /></InfoCell>
          </InfoBottom>
        </InfoPanel>

        <BtnGroup $ml={8.6}>
          <ToolBtn $w={34} $dim><LoopIcon /></ToolBtn>
          <ToolBtn $w={72} $dim $sep><NoteIcon /><DimText>100%</DimText></ToolBtn>
          <ToolBtn $w={16} $dim $sep><Chevrons c="#9ea2b0" /></ToolBtn>
        </BtnGroup>
        <BtnGroup $ml={6}>
          <ToolBtn $w={50} $dim><Fork /><DimText>0</DimText></ToolBtn>
          <ToolBtn $w={19} $dim $sep><PlusMinus /></ToolBtn>
        </BtnGroup>
        <BtnGroup $ml={336}><ToolBtn><Wave /></ToolBtn></BtnGroup>
        <BtnGroup $ml={6}>
          <ToolBtn $w={35}><Headstock h={20} /></ToolBtn>
          <ToolBtn $w={34} $sep><Piano /></ToolBtn>
          <ToolBtn $w={34} $dim $sep><Amp /></ToolBtn>
        </BtnGroup>
        <BtnGroup $ml={7}>
          <ToolBtn><ForkWave /></ToolBtn>
          <ToolBtn $sep><Jack /></ToolBtn>
        </BtnGroup>
      </Toolbar>

      <TabBar>
        <Tab $w={948}>终曲</Tab>
        <Tab $w={946} $on>一只天使的出现</Tab>
        <AddTab>+</AddTab>
      </TabBar>

      <ScoreArea>
        <Gutter $w={95} />
        <Page><Score /></Page>
        <Gutter $w={94}>
          <ScrollTrack><ScrollThumb /></ScrollTrack>
        </Gutter>
      </ScoreArea>

      <Panel>
        <TrackCols>
          <Cell $j="center"><svg width="14" height="14" fill="#f4f4f6" style={{ marginLeft: -12 }}><rect y="5.5" width="14" height="3" /><rect x="5.5" width="3" height="14" /></svg></Cell>
          <Cell $pl={11}>音轨<Dots /></Cell>
          <Cell />
          <Cell $pl={4}><MuteIcon c="#4a4b53" /><Phones c="#4a4b53" /></Cell>
          <Cell $pl={69}>音量</Cell>
          <Cell $span={3} $j="center">相位</Cell>
          <Cell><Clip>均衡器</Clip></Cell>
        </TrackCols>
        <Ruler>
          <Playhead />
          {measures.map((i) => <RulerNum key={i}>{rulerLabels[i] ?? ""}</RulerNum>)}
        </Ruler>

        <TrackCols $bg="#3a3c47">
          <TrackAccent />
          <Cell $j="center"><Headstock h={19} c="#eeeef2" /></Cell>
          <Cell><TrackLabel><em>1.</em>Steel Guitar</TrackLabel></Cell>
          <Cell $pl={44}><Eye /></Cell>
          <Cell $pl={4}><MuteIcon c="#5a5c67" /><Phones c="#5a5c67" /></Cell>
          <Cell>
            <Slider>
              <MeterRow><MeterBar $w={90} $c="#3f6fd8" $h={3} /><MeterBar $w={24} $c="#e3a99e" $h={3} /></MeterRow>
              <MeterRow><MeterBar $w={90} $c="#3f6fd8" $h={3} /><MeterBar $w={12} $c="#e3a99e" $h={3} /></MeterRow>
              <Handle $x={87} />
            </Slider>
          </Cell>
          <Cell $j="center"><AutoA>A</AutoA></Cell>
          <Cell $j="center"><Knob /></Cell>
          <Cell $j="center"><AutoA>A</AutoA></Cell>
          <Cell $j="center"><Faders /></Cell>
        </TrackCols>
        <Cells>
          {measures.map((i) => <Measure key={i}>{i === 0 && <Cursor />}</Measure>)}
        </Cells>

        <TrackCols>
          <Cell />
          <Cell $pl={11}>主控台</Cell>
          <Cell />
          <Cell $j="center"><Knob /></Cell>
          <Cell>
            <Slider>
              <MeterRow><MeterBar $w={10} $c="#3f6fd8" $h={2} /></MeterRow>
              <MeterRow><MeterBar $w={10} $c="#3f6fd8" $h={2} /></MeterRow>
              <Handle $x={83} />
            </Slider>
          </Cell>
          <Cell $j="center"><AutoA>A</AutoA></Cell>
          <Cell $j="center"><Knob /></Cell>
          <Cell $j="center"><AutoA>A</AutoA></Cell>
          <Cell />
        </TrackCols>
        <TimelineFoot><HScroll /></TimelineFoot>
      </Panel>

      <Taskbar>
        <StartSlot><Windows /></StartSlot>
        <SearchBox>
          <SearchGlass />
          <SearchLabel>搜索</SearchLabel>
          <SearchArt><Landscape /></SearchArt>
        </SearchBox>
        <Apps>
          <AppSlot><Snip /></AppSlot>
          <AppSlot><TranslateIcon /></AppSlot>
          <AppSlot><PowerShell /></AppSlot>
          <AppSlot><Edge /></AppSlot>
          <AppSlot $open><Firefox /></AppSlot>
          <AppSlot $open><Folder /></AppSlot>
          <AppSlot $active><GpIcon s={27} /></AppSlot>
          <AppSlot $open><RecDot /></AppSlot>
          <AppSlot $open><PinkApp /></AppSlot>
        </Apps>
        <Tray>
          <TraySlot $w={62}><Plug /><BatteryBody><BatteryFill>100%</BatteryFill></BatteryBody></TraySlot>
          <TraySlot $w={27}><Chevron /></TraySlot>
          <TraySlot $w={32}><RedSpeaker /></TraySlot>
          <TraySlot $w={29}><BatteryIcon /></TraySlot>
          <TraySlot $w={29}><VolOutline /></TraySlot>
          <TraySlot $w={33}><Wifi /></TraySlot>
          <TraySlot $w={36}><Pen /></TraySlot>
          <TraySlot $w={30}><ImeText>英</ImeText></TraySlot>
          <TraySlot $w={91}><Clock>21:08<br />2024/10/2</Clock></TraySlot>
          <TraySlot $w={54}><Notify /></TraySlot>
          <TrayEnd />
        </Tray>
      </Taskbar>
    </Root>
  );
}
